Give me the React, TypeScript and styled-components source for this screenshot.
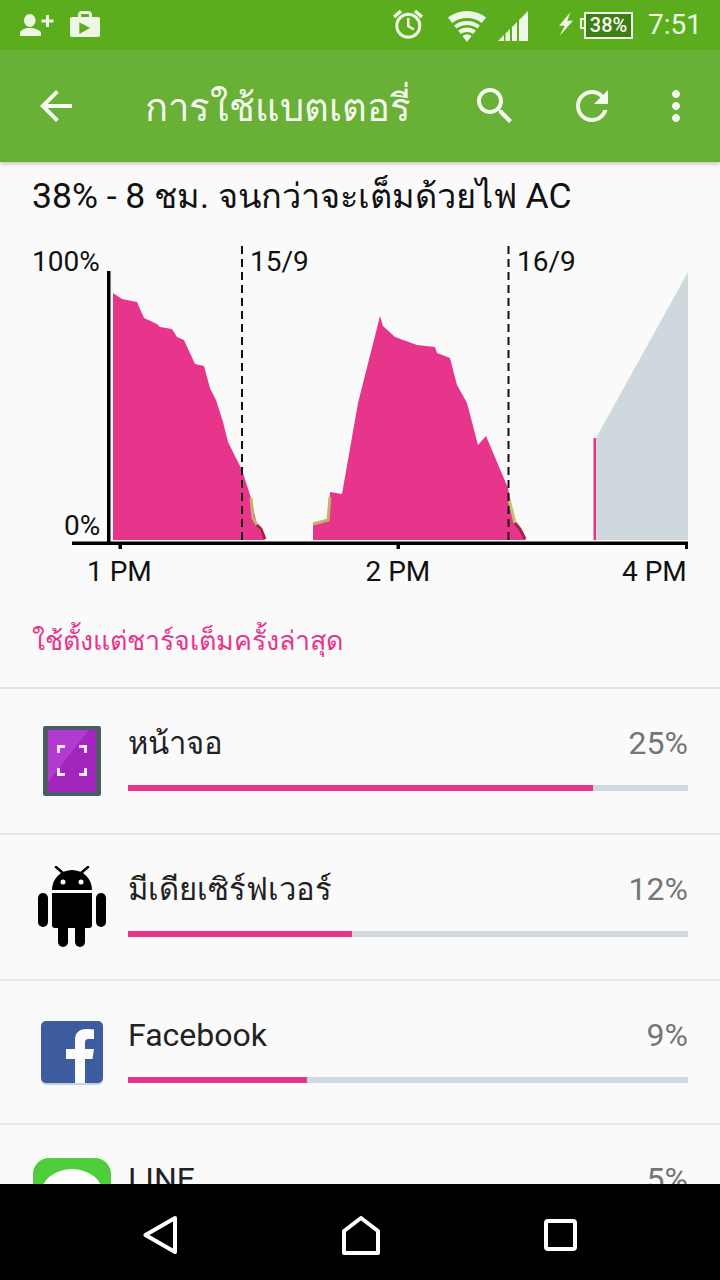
import styled, {createGlobalStyle} from "styled-components";

const GlobalStyle = createGlobalStyle`
    html, body {
        margin: 0;
        padding: 0;
        background: #000;
    }
    body {
        font-family: Roboto, "Noto Sans", "DejaVu Sans", sans-serif;
    }
`

const rows = [
    {name: "หน้าจอ", thai: true, pct: 25, bar: 83, height: 146, icon: <ScreenIcon/>},
    {name: "มีเดียเซิร์ฟเวอร์", thai: true, pct: 12, bar: 40, height: 146, icon: <AndroidIcon/>},
    {name: "Facebook", thai: false, pct: 9, bar: 32, height: 144, icon: <FacebookIcon/>},
    {name: "LINE", thai: false, pct: 5, bar: 18, height: 146, icon: <LineIcon/>},
]

const firstArea = "113,540 113,293 122,299 137,302 144,318 157,324 160,327 172,329 177,337 184,340 195,364 204,366 210,388 216,400 223,422 228,442 242,470 251,498 257,525 265,540"
const secondArea = "313,540 313,524 328,521 330,492 342,494 358,403 380,316 383,326 395,337 417,345 435,347 437,353 450,358 457,385 467,403 478,445 486,436 508,488 515,523 526,540"

export default function App() {
    return (
        <Screen>
            <GlobalStyle/>
            <StatusBar>
                <StatusGroup>
                    <PersonAddIcon/>
                    <BagIcon/>
                </StatusGroup>
                <StatusGroup>
                    <AlarmIcon/>
                    <WifiIcon/>
                    <SignalIcon/>
                    <BoltIcon/>
                    <Battery>38%</Battery>
                    <Clock>7:51</Clock>
                </StatusGroup>
            </StatusBar>
            <Toolbar>
                <ToolIcon $left={32} viewBox="0 0 24 24">
                    <path d="M20 11H7.83l5.59-5.59L12 4l-8 8 8 8 1.41-1.41L7.83 13H20v-2z"/>
                </ToolIcon>
                <Title>การใช้แบตเตอรี่</Title>
                <ToolIcon $left={0} viewBox="0 0 24 24">
                    <path d="M15.5 14h-.79l-.28-.27C15.41 12.59 16 11.11 16 9.5 16 5.91 13.09 3 9.5 3S3 5.91 3 9.5 5.91 16 9.5 16c1.61 0 3.09-.59 4.23-1.57l.27.28v.79l5 4.99L20.49 19l-4.99-5zm-6 0C7.01 14 5 11.99 5 9.5S7.01 5 9.5 5 14 7.01 14 9.5 11.99 14 9.5 14z"/>
                </ToolIcon>
                <ToolIcon $left={49} viewBox="0 0 24 24">
                    <path d="M17.65 6.35C16.2 4.9 14.21 4 12 4c-4.42 0-7.99 3.58-7.99 8s3.57 8 7.99 8c3.73 0 6.84-2.55 7.73-6h-2.08c-.82 2.33-3.04 4-5.65 4-3.31 0-6-2.69-6-6s2.69-6 6-6c1.66 0 3.14.69 4.22 1.78L13 11h7V4l-2.35 2.35z"/>
                </ToolIcon>
                <ToolIcon $left={36} viewBox="0 0 24 24">
                    <path d="M12 8c1.1 0 2-.9 2-2s-.9-2-2-2-2 .9-2 2 .9 2 2 2zm0 2c-1.1 0-2 .9-2 2s.9 2 2 2 2-.9 2-2-.9-2-2-2zm0 6c-1.1 0-2 .9-2 2s.9 2 2 2 2-.9 2-2-.9-2-2-2z"/>
                </ToolIcon>
            </Toolbar>
            <Content>
                <Headline>38% - 8 <ThaiRun>ชม. จนกว่าจะเต็มด้วยไฟ</ThaiRun> AC</Headline>
                <Chart viewBox="0 240 720 350">
                    <polygon points={firstArea} fill="#e8358c"/>
                    <polygon points={secondArea} fill="#e8358c"/>
                    <polygon points="596,540 596,438 688,272 688,540" fill="#cfd8dc"/>
                    <rect x="593.5" y="438" width="2.5" height="102" fill="#e8358c"/>
                    <polyline points="251,498 253,518 257,525" fill="none" stroke="#c6b26c" strokeWidth="3"/>
                    <polyline points="257,525 261,529 265,539" fill="none" stroke="#a81f45" strokeWidth="3"/>
                    <polyline points="313,524 328,520 330,497" fill="none" stroke="#c6b26c" strokeWidth="3"/>
                    <polyline points="509,499 515,523" fill="none" stroke="#c6c26c" strokeWidth="3"/>
                    <polyline points="515,523 520,529 525,539" fill="none" stroke="#a81f45" strokeWidth="3"/>
                    <line x1="242" y1="246" x2="242" y2="540" stroke="#111" strokeWidth="2" strokeDasharray="8 5"/>
                    <line x1="508.5" y1="246" x2="508.5" y2="540" stroke="#111" strokeWidth="2" strokeDasharray="8 5"/>
                    <rect x="107" y="271" width="3.5" height="273" fill="#000"/>
                    <rect x="72" y="541.5" width="616" height="3.5" fill="#000"/>
                    <rect x="118.5" y="544" width="3.5" height="5" fill="#000"/>
                    <rect x="396.5" y="544" width="3.5" height="5" fill="#000"/>
                    <rect x="685" y="544" width="3" height="5" fill="#000"/>
                    <ChartLabel x="32" y="271">100%</ChartLabel>
                    <ChartLabel x="64" y="535">0%</ChartLabel>
                    <ChartLabel x="250" y="271">15/9</ChartLabel>
                    <ChartLabel x="517" y="271">16/9</ChartLabel>
                    <ChartLabel x="87" y="581">1 PM</ChartLabel>
                    <ChartLabel x="365.5" y="581">2 PM</ChartLabel>
                    <ChartLabel x="622" y="581">4 PM</ChartLabel>
                </Chart>
                <SinceLabel>ใช้ตั้งแต่ชาร์จเต็มครั้งล่าสุด</SinceLabel>
                {rows.map(row => (
                    <Row key={row.name} $height={row.height}>
                        <IconCell>{row.icon}</IconCell>
                        <RowBody>
                            <RowTop>
                                <RowName $thai={row.thai}>{row.name}</RowName>
                                <RowPct>{row.pct}%</RowPct>
                            </RowTop>
                            <BarTrack>
                                <BarFill style={{width: `${row.bar}%`}}/>
                            </BarTrack>
                        </RowBody>
                    </Row>
                ))}
            </Content>
            <NavBar>
                <svg width="34" height="38" viewBox="0 0 34 38">
                    <path d="M32 2 L2.500 19 L32 36 Z" fill="none" stroke="#fff" strokeWidth="4" strokeLinejoin="round"/>
                </svg>
                <svg width="38" height="39" viewBox="0 0 38 39">
                    <path d="M2 37 V15 L19 2 L36 15 V37 Z" fill="none" stroke="#fff" strokeWidth="4" strokeLinejoin="round"/>
                </svg>
                <svg width="33" height="32" viewBox="0 0 33 32">
                    <rect x="2" y="2" width="29" height="28" rx="2" fill="none" stroke="#fff" strokeWidth="4"/>
                </svg>
            </NavBar>
        </Screen>
    )
}

function PersonAddIcon() {
    return (
        <StatusSvg $w={34} $ml={0} viewBox="0 0 34 34">
            <ellipse cx="9.800" cy="12.500" rx="5.800" ry="6.500"/>
            <path d="M0 28v-3c0-2.500 4-4 7-5h5.500c3 1 8.500 2.500 8.500 5v3z"/>
            <path d="M26 7h3v4.500h4.500v3H29V19h-3v-4.500h-4.500v-3H26z"/>
        </StatusSvg>
    )
}

function BagIcon() {
    return (
        <StatusSvg $w={30} $ml={16} viewBox="0 0 30 34">
            <path fillRule="evenodd" d="M8 9V7a4 4 0 0 1 4-4h6a4 4 0 0 1 4 4v2h6a2 2 0 0 1 2 2v16a2 2 0 0 1-2 2H2a2 2 0 0 1-2-2V11a2 2 0 0 1 2-2zM11 9h8V7a1 1 0 0 0-1-1h-6a1 1 0 0 0-1 1zM9.300 14.300V26L20 20z"/>
        </StatusSvg>
    )
}

function AlarmIcon() {
    return (
        <StatusSvg $w={30} $ml={0} viewBox="0 0 30 34">
            <circle cx="15.300" cy="17.700" r="11.500" fill="none" stroke="#eef7e6" strokeWidth="3"/>
            <path d="M14 10h2.500v7.500l5 3-1.300 2-6.200-3.700z"/>
            <path d="M1 9 8 3M29 9 22 3" fill="none" stroke="#eef7e6" strokeWidth="3.500"/>
        </StatusSvg>
    )
}

function WifiIcon() {
    return (
        <StatusSvg $w={39} $ml={25} viewBox="0 0 39 34">
            <path d="M0 9.600A31 31 0 0 1 38.100 9.600L33.800 15.100A24 24 0 0 0 4.200 15.100z"/>
            <path d="M6.100 17.500A21 21 0 0 1 31.900 17.500L29.500 20.600A17 17 0 0 0 8.500 20.600z"/>
            <path d="M10.100 22.600A14.500 14.500 0 0 1 27.900 22.600L25.200 26.100A10 10 0 0 0 12.800 26.100z"/>
            <path d="M14.400 28.100A7.500 7.500 0 0 1 23.600 28.100L19 34z"/>
        </StatusSvg>
    )
}

function SignalIcon() {
    return (
        <StatusSvg $w={30} $ml={11} viewBox="0 0 30 34">
            <path d="M0 33 6 27v6zM7.500 33V25.500L12 21v12zM14 33V19l5-5v19zM21 33V12l9-9v30z"/>
        </StatusSvg>
    )
}

function BoltIcon() {
    return (
        <StatusSvg $w={15} $ml={30} viewBox="0 0 15 34">
            <path d="M12.300 4.300 1 17.700h5.700L1.700 27.700 15 12.700H9.300z"/>
        </StatusSvg>
    )
}

function ScreenIcon() {
    return (
        <svg width="58" height="70" viewBox="0 0 58 70">
            <rect width="58" height="70" rx="2" fill="#4f5b66"/>
            <rect x="5" y="4" width="48" height="62" fill="#a225bd"/>
            <polygon points="5,4 46,4 5,56" fill="#b33acf"/>
            <path d="M14 27V19h8v3h-5v5zM44 27V19h-8v3h5v5zM14 42v8h8v-3h-5v-5zM44 42v8h-8v-3h5v-5z" fill="#f5e8fa"/>
        </svg>
    )
}

function AndroidIcon() {
    return (
        <svg width="68" height="82" viewBox="0 0 68 82">
            <path d="M14 24a20 20 0 0 1 40 0z"/>
            <path d="M18 1 25 7M50 1 43 7" stroke="#000" strokeWidth="2.500" strokeLinecap="round"/>
            <circle cx="25" cy="16" r="2.500" fill="#fff"/>
            <circle cx="43" cy="16" r="2.500" fill="#fff"/>
            <path d="M14 27h40v32a3 3 0 0 1-3 3H17a3 3 0 0 1-3-3z"/>
            <rect x="0" y="27" width="10" height="34" rx="5"/>
            <rect x="58" y="27" width="10" height="34" rx="5"/>
            <rect x="20" y="50" width="10" height="31" rx="5"/>
            <rect x="37" y="50" width="10" height="31" rx="5"/>
        </svg>
    )
}

function FacebookIcon() {
    return (
        <svg width="64" height="66" viewBox="0 0 64 66">
            <rect x="1" y="2" width="62" height="63" rx="5" fill="#c9d0dc"/>
            <rect x="1" y="1" width="62" height="62" rx="5" fill="#3d5ca0"/>
            <path d="M35 63V39h-9V29h9v-9c0-7 4-11 11-11 3 0 6 .2 8 .5V19h-5c-3 0-4 1-4 4v6h9l-1.500 10H45v24z" fill="#fcfcfd"/>
        </svg>
    )
}

function LineIcon() {
    return (
        <svg width="78" height="78" viewBox="0 0 78 78">
            <rect width="78" height="78" rx="16" fill="#4fce3c"/>
            <ellipse cx="39" cy="36" rx="31" ry="25" fill="#fff"/>
        </svg>
    )
}

const Screen = styled.div`
    width: 720px;
    height: 1280px;
    display: flex;
    flex-direction: column;
    overflow: hidden;
    background: #fafafa;
`

const StatusBar = styled.div`
    height: 50px;
    flex: none;
    display: flex;
    justify-content: space-between;
    align-items: center;
    padding: 0 18px 0 20px;
    background: #5bad1e;
`

const StatusGroup = styled.div`
    display: flex;
    align-items: center;
`

const StatusSvg = styled.svg<{$w: number; $ml: number}>`
    width: ${props => props.$w}px;
    height: 34px;
    margin-left: ${props => props.$ml}px;
    fill: #eef7e6;
    flex: none;
`

const Battery = styled.div`
    position: relative;
    width: 49px;
    height: 27px;
    margin-left: 11px;
    box-sizing: border-box;
    border: 2px solid #eef7e6;
    background: #3f7d15;
    color: #f4faee;
    font-size: 20px;
    font-weight: 500;
    line-height: 23px;
    text-align: center;

    &::before {
        content: "";
        position: absolute;
        left: -6px;
        top: 4px;
        width: 4px;
        height: 11px;
        border: solid #eef7e6;
        border-width: 2px 0 2px 2px;
        box-sizing: border-box;
    }
`

const Clock = styled.div`
    margin-left: 15px;
    color: #eef7e6;
    font-size: 28px;
    line-height: 34px;
`

const Toolbar = styled.div`
    position: relative;
    z-index: 1;
    height: 112px;
    flex: none;
    display: flex;
    align-items: center;
    background: #69b037;
    box-shadow: 0 2px 4px rgba(0, 0, 0, 0.22);
`

const ToolIcon = styled.svg<{$left: number}>`
    width: 48px;
    height: 48px;
    margin-left: ${props => props.$left}px;
    fill: #f4faee;
    flex: none;
`

const Title = styled.div`
    width: 391px;
    padding: 2px 0 0 65px;
    box-sizing: border-box;
    color: #f4faee;
    font-size: 38.2px;
    white-space: nowrap;
`

const Content = styled.main`
    flex: 1;
    min-height: 0;
    overflow: hidden;
    background: #fafafa;
`

const Headline = styled.div`
    height: 78px;
    padding: 14px 0 0 32px;
    box-sizing: border-box;
    color: #111;
    font-size: 35.5px;
    line-height: 40px;
    white-space: nowrap;
`

const ThaiRun = styled.span`
    font-size: 34.3px;
`

const Chart = styled.svg`
    display: block;
    width: 720px;
    height: 350px;
`

const ChartLabel = styled.text`
    font-size: 28px;
    fill: #111;
`

const SinceLabel = styled.div`
    height: 97px;
    padding: 31px 0 0 32px;
    box-sizing: border-box;
    color: #e8358c;
    font-size: 26.85px;
    line-height: 40px;
`

const Row = styled.div<{$height: number}>`
    height: ${props => props.$height}px;
    box-sizing: border-box;
    display: flex;
    border-top: 2px solid #e6e6e6;
`

const IconCell = styled.div`
    width: 144px;
    height: 144px;
    flex: none;
    display: flex;
    justify-content: center;
    align-items: center;
`

const RowBody = styled.div`
    width: 560px;
    margin-left: -16px;
    padding-top: 33px;
`

const RowTop = styled.div`
    height: 63px;
    display: flex;
    justify-content: space-between;
`

const RowName = styled.div<{$thai: boolean}>`
    color: #222;
    font-size: ${props => props.$thai ? 31 : 32}px;
    line-height: ${props => props.$thai ? 44 : 42}px;
`

const RowPct = styled.div`
    color: #757575;
    font-size: 32px;
    line-height: 42px;
`

const BarTrack = styled.div`
    height: 6px;
    background: #cfd8dc;
`

const BarFill = styled.div`
    height: 100%;
    background: #e8358c;
`

const NavBar = styled.nav`
    position: relative;
    z-index: 1;
    height: 96px;
    flex: none;
    box-sizing: border-box;
    display: flex;
    justify-content: space-between;
    align-items: center;
    padding: 6px 143px 0 143px;
    background: #000;
`
